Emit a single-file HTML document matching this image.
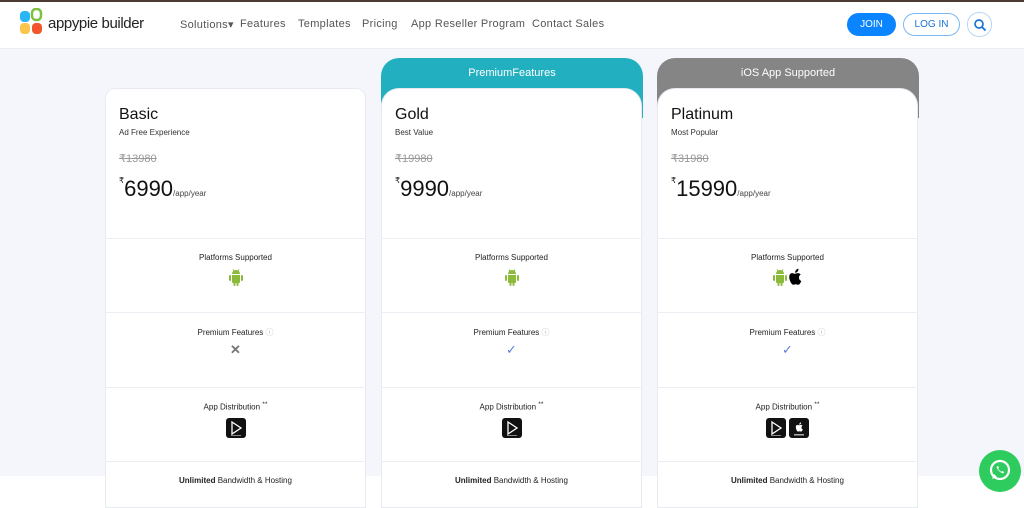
<!DOCTYPE html>
<html><head><meta charset="utf-8"><style>
*{margin:0;padding:0;box-sizing:border-box}
body{width:1024px;height:492px;overflow:hidden;background:#fff;font-family:"Liberation Sans",Arial,sans-serif;position:relative}
.top{position:absolute;left:0;top:0;width:1024px;height:2px;background:#4a3a33}
.hdr{position:absolute;left:0;top:2px;width:1024px;height:47px;background:#fff;border-bottom:1px solid #eceef5}
.bg{position:absolute;left:0;top:49px;width:1024px;height:427px;background:#f5f6fc}
.nav{position:absolute;top:16px;font-size:11px;color:#555;letter-spacing:.3px}
.logo{position:absolute;left:48px;top:13px;font-size:15px;color:#222;letter-spacing:-.4px}
.btn{position:absolute;top:11px;height:23px;border-radius:12px;font-size:10px;text-align:center;line-height:21px}
.card{position:absolute;width:261px;background:#fff;border:1px solid #e8eaf2;border-radius:10px 10px 0 0;height:420px;overflow:hidden}
.tab{position:absolute;width:262px;top:58px;height:60px;border-radius:18px 18px 0 0;color:#fff;font-size:11px;text-align:center;padding-top:9px}
.h{position:absolute;left:13px;font-size:16px;color:#111}
.s{position:absolute;left:13px;font-size:8px;color:#333}
.old{position:absolute;left:13px;font-size:11px;color:#999;text-decoration:line-through}
.pr{position:absolute;left:13px;font-size:22px;color:#111}
.pr small{font-size:8px;vertical-align:top}
.pr i{font-style:normal;font-size:8px;color:#444}
.sec{position:absolute;left:0;width:261px;border-top:1px solid #eceef4;text-align:center;font-size:8px;color:#222}
.ic{display:inline-block;vertical-align:middle;margin-top:6px}
</style></head><body>
<div class="top"></div>
<div class="hdr">
<svg style="position:absolute;left:19px;top:6px" width="26" height="28" viewBox="0 0 26 28"><rect x="1" y="3" width="10" height="11" rx="4" fill="#29b6f6"/><rect x="13" y="1" width="9" height="11" rx="4" fill="none" stroke="#7cc142" stroke-width="2.5"/><rect x="1" y="15" width="10" height="11" rx="4" fill="#f9c54a"/><rect x="13" y="15" width="10" height="11" rx="4" fill="#f2552c"/></svg>
<div class="logo">appypie builder</div>
<div class="nav" style="left:180px">Solutions▾</div>
<div class="nav" style="left:240px">Features</div>
<div class="nav" style="left:298px">Templates</div>
<div class="nav" style="left:362px">Pricing</div>
<div class="nav" style="left:411px">App Reseller Program</div>
<div class="nav" style="left:532px">Contact Sales</div>
<div class="btn" style="left:847px;width:49px;background:#0a84ff;color:#fff;border:1px solid #0a84ff">JOIN</div>
<div class="btn" style="left:903px;width:57px;border:1px solid #7ab8f5;color:#1a73d9">LOG IN</div>
<div class="btn" style="left:967px;width:25px;height:25px;top:10px;border:1px solid #b8d6f5"><svg width="14" height="14" viewBox="0 0 14 14" style="margin-top:5px"><circle cx="6" cy="6" r="4" fill="none" stroke="#1a73d9" stroke-width="1.7"/><path d="M9 9l3.5 3.5" stroke="#1a73d9" stroke-width="1.9"/></svg></div>
</div>
<div class="bg"></div>
<div class="tab" style="left:381px;background:#22b0c0">PremiumFeatures</div>
<div class="tab" style="left:657px;background:#858585">iOS App Supported</div>

<svg width="0" height="0" style="position:absolute"><defs>
<symbol id="and" viewBox="0 0 16 18"><path d="M4 6a4 4 0 0 1 8 0z" fill="#8cba3a"/><path d="M4 7h8v7a1 1 0 0 1-1 1H5a1 1 0 0 1-1-1z" fill="#8cba3a"/><rect x="1" y="7" width="2" height="6" rx="1" fill="#8cba3a"/><rect x="13" y="7" width="2" height="6" rx="1" fill="#8cba3a"/><rect x="5.5" y="14" width="2" height="4" rx="1" fill="#8cba3a"/><rect x="8.5" y="14" width="2" height="4" rx="1" fill="#8cba3a"/><path d="M5 1.5l1.2 2M11 1.5l-1.2 2" stroke="#8cba3a"/></symbol>
<symbol id="apl" viewBox="0 0 16 18"><path d="M11 9.5c0-2 1.6-2.8 1.7-2.9-1-1.4-2.4-1.5-2.9-1.5-1.2-.1-2.4.7-3 .7s-1.6-.7-2.6-.7C2.800 5.1 1.2 6.300 1.2 9c0 3.300 2.400 7.800 4.200 7.800.8 0 1.400-.6 2.400-.6s1.400.6 2.400.6c1.500 0 2.700-2.700 3.100-3.800-2-.8-2.300-2.400-2.300-3.500zM9.600 3.500c.6-.7 1-1.700.9-2.700-.9 0-1.900.6-2.500 1.300-.5.600-1 1.600-.9 2.600 1 .1 1.900-.5 2.500-1.200z" fill="#000"/></symbol>
<symbol id="gp" viewBox="0 0 20 20"><rect width="20" height="20" rx="3" fill="#111"/><path d="M6 4l9 6-9 6z" fill="none" stroke="#fff" stroke-width="1.3"/><rect x="5" y="17" width="10" height="1" fill="#888"/></symbol>
<symbol id="as" viewBox="0 0 20 20"><rect width="20" height="20" rx="3" fill="#111"/><g transform="translate(5,2) scale(.6)"><use href="#aplw"/></g><path d="M12.5 9.5c0-1.200 1-1.700 1-1.700-.6-.8-1.400-.9-1.700-.9-.7 0-1.400.4-1.800.4s-1-.4-1.500-.4c-.8 0-1.700.7-1.700 2.200 0 1.900 1.400 4.500 2.400 4.500.5 0 .8-.3 1.400-.3s.8.3 1.400.3c.9 0 1.600-1.600 1.800-2.200-1.200-.5-1.300-1.400-1.300-1.900zM11.600 6c.4-.4.6-1 .5-1.600-.5 0-1.100.4-1.400.8-.3.300-.6.900-.5 1.500.6 0 1.100-.3 1.400-.7z" fill="#fff"/><rect x="5" y="16" width="10" height="1.5" fill="#aaa"/></symbol>
</defs></svg>

<div class="card" style="left:105px;top:88px">
<div class="h" style="top:17px">Basic</div><div class="s" style="top:39px">Ad Free Experience</div>
<div class="old" style="top:63px">₹13980</div>
<div class="pr" style="top:87px"><small>₹</small>6990<i>/app/year</i></div>
</div>
<div class="card" style="left:381px;top:88px;border-radius:18px 18px 0 0">
<div class="h" style="top:17px">Gold</div><div class="s" style="top:39px">Best Value</div>
<div class="old" style="top:63px">₹19980</div>
<div class="pr" style="top:87px"><small>₹</small>9990<i>/app/year</i></div>
</div>
<div class="card" style="left:657px;top:88px;border-radius:18px 18px 0 0">
<div class="h" style="top:17px">Platinum</div><div class="s" style="top:39px">Most Popular</div>
<div class="old" style="top:63px">₹31980</div>
<div class="pr" style="top:87px"><small>₹</small>15990<i>/app/year</i></div>
</div>

<div style="position:absolute;left:105px;top:238px">
<div class="sec" style="top:0;height:74px;padding-top:14px">Platforms Supported<br><svg class="ic" width="16" height="18"><use href="#and"/></svg></div>
<div class="sec" style="top:74px;height:75px;padding-top:14px">Premium Features <span style="color:#bbb">ⓘ</span><br><span style="color:#777;font-size:13px;line-height:24px;font-weight:bold">✕</span></div>
<div class="sec" style="top:149px;height:74px;padding-top:13px">App Distribution <sup>**</sup><br><svg class="ic" width="20" height="20"><use href="#gp"/></svg></div>
<div class="sec" style="top:223px;height:40px;padding-top:14px"><b>Unlimited</b> Bandwidth &amp; Hosting</div>
</div>
<div style="position:absolute;left:381px;top:238px">
<div class="sec" style="top:0;height:74px;padding-top:14px">Platforms Supported<br><svg class="ic" width="16" height="18"><use href="#and"/></svg></div>
<div class="sec" style="top:74px;height:75px;padding-top:14px">Premium Features <span style="color:#bbb">ⓘ</span><br><span style="color:#5b7fd6;font-size:13px;line-height:24px">✓</span></div>
<div class="sec" style="top:149px;height:74px;padding-top:13px">App Distribution <sup>**</sup><br><svg class="ic" width="20" height="20"><use href="#gp"/></svg></div>
<div class="sec" style="top:223px;height:40px;padding-top:14px"><b>Unlimited</b> Bandwidth &amp; Hosting</div>
</div>
<div style="position:absolute;left:657px;top:238px">
<div class="sec" style="top:0;height:74px;padding-top:14px">Platforms Supported<br><svg class="ic" width="16" height="18"><use href="#and"/></svg><svg class="ic" width="16" height="18"><use href="#apl"/></svg></div>
<div class="sec" style="top:74px;height:75px;padding-top:14px">Premium Features <span style="color:#bbb">ⓘ</span><br><span style="color:#5b7fd6;font-size:13px;line-height:24px">✓</span></div>
<div class="sec" style="top:149px;height:74px;padding-top:13px">App Distribution <sup>**</sup><br><svg class="ic" width="20" height="20"><use href="#gp"/></svg> <svg class="ic" width="20" height="20"><use href="#as"/></svg></div>
<div class="sec" style="top:223px;height:40px;padding-top:14px"><b>Unlimited</b> Bandwidth &amp; Hosting</div>
</div>
<div style="position:absolute;left:979px;top:450px;width:42px;height:42px;border-radius:50%;background:#2ecc5f"><svg width="42" height="42" viewBox="0 0 42 42"><circle cx="21" cy="20" r="9" fill="none" stroke="#fff" stroke-width="2.2"/><path d="M13 29l2-5 3 3z" fill="#fff"/><path d="M17.5 17c1 3 3.5 5.5 6.5 6.5l1.2-1.5-2-1-1 .8c-1.2-.6-2.5-1.9-3-3l.8-1-1-2z" fill="#fff"/></svg></div>
</body></html>
